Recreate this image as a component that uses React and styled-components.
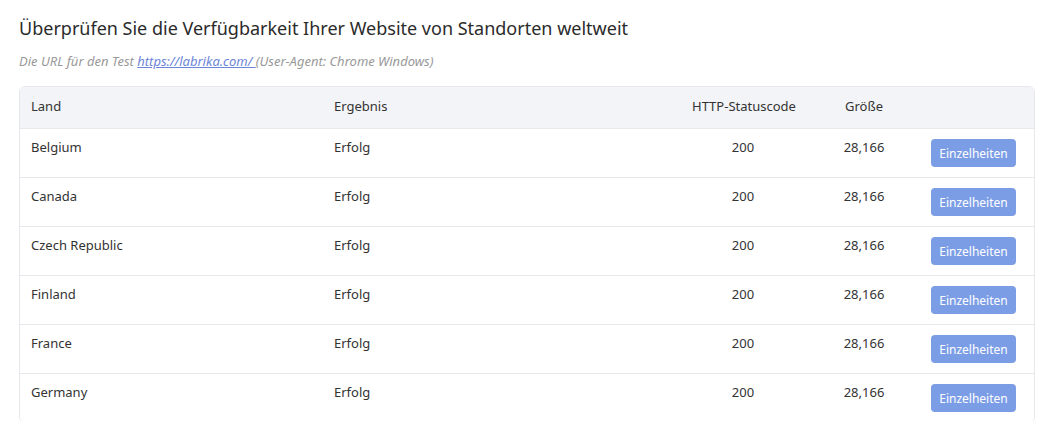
import React from 'react';
import styled, { createGlobalStyle } from 'styled-components';

const GlobalStyle = createGlobalStyle`
  body {
    margin: 0;
    background: #fff;
    font-family: 'Noto Sans', 'Open Sans', sans-serif;
    color: #333;
  }
`;

const rows = [
  'Belgium',
  'Canada',
  'Czech Republic',
  'Finland',
  'France',
  'Germany',
];

const Page = styled.div`
  padding: 14px 10px 0 19px;
`;

const Title = styled.h1`
  margin: 0;
  font-size: 18px;
  font-weight: 400;
  line-height: 28px;
  color: #2b2b2b;
`;

const Subtitle = styled.p`
  margin: 10px 0 0;
  font-size: 13px;
  line-height: 18px;
  font-style: italic;
  color: #999;
`;

const Link = styled.a`
  color: #6c85d9;
  text-decoration: underline;
`;

const Card = styled.div`
  margin-top: 16px;
  border: 1px solid #e6e8ec;
  border-radius: 6px;
  overflow: hidden;
`;

const Row = styled.div`
  display: grid;
  grid-template-columns: 302px 358px 126px 116px 1fr;
  height: ${(p) => (p.$head ? '41px' : '48px')};
  background: ${(p) => (p.$head ? '#f3f4f7' : '#fff')};
  border-top: ${(p) => (p.$head ? 'none' : '1px solid #e6e8ec')};
  font-size: 13px;
  line-height: 18px;
`;

const Cell = styled.div`
  padding: ${(p) => (p.$head ? '10px' : '9px')} 12px 0;
  text-align: ${(p) => p.$align || 'left'};
  white-space: nowrap;

  &:first-child {
    padding-left: 11px;
  }
`;

const ButtonCell = styled.div`
  display: flex;
  justify-content: flex-end;
  align-items: flex-start;
  padding: 10px 18px 0 0;
`;

const Button = styled.button`
  height: 28px;
  width: 85px;
  border: none;
  border-radius: 4px;
  background: #7b9de6;
  color: #fff;
  font-family: inherit;
  font-size: 12px;
  padding: 0;
`;

export default function App() {
  return (
    <>
      <GlobalStyle />
      <Page>
        <Title>Überprüfen Sie die Verfügbarkeit Ihrer Website von Standorten weltweit</Title>
        <Subtitle>
          Die URL für den Test <Link href="#">https://labrika.com/ </Link>(User-Agent: Chrome Windows)
        </Subtitle>
        <Card>
          <Row $head>
            <Cell $head>Land</Cell>
            <Cell $head>Ergebnis</Cell>
            <Cell $head $align="center">HTTP-Statuscode</Cell>
            <Cell $head $align="center">Größe</Cell>
            <Cell $head />
          </Row>
          {rows.map((land) => (
            <Row key={land}>
              <Cell>{land}</Cell>
              <Cell>Erfolg</Cell>
              <Cell $align="center">200</Cell>
              <Cell $align="center">28,166</Cell>
              <ButtonCell>
                <Button>Einzelheiten</Button>
              </ButtonCell>
            </Row>
          ))}
        </Card>
      </Page>
    </>
  );
}
